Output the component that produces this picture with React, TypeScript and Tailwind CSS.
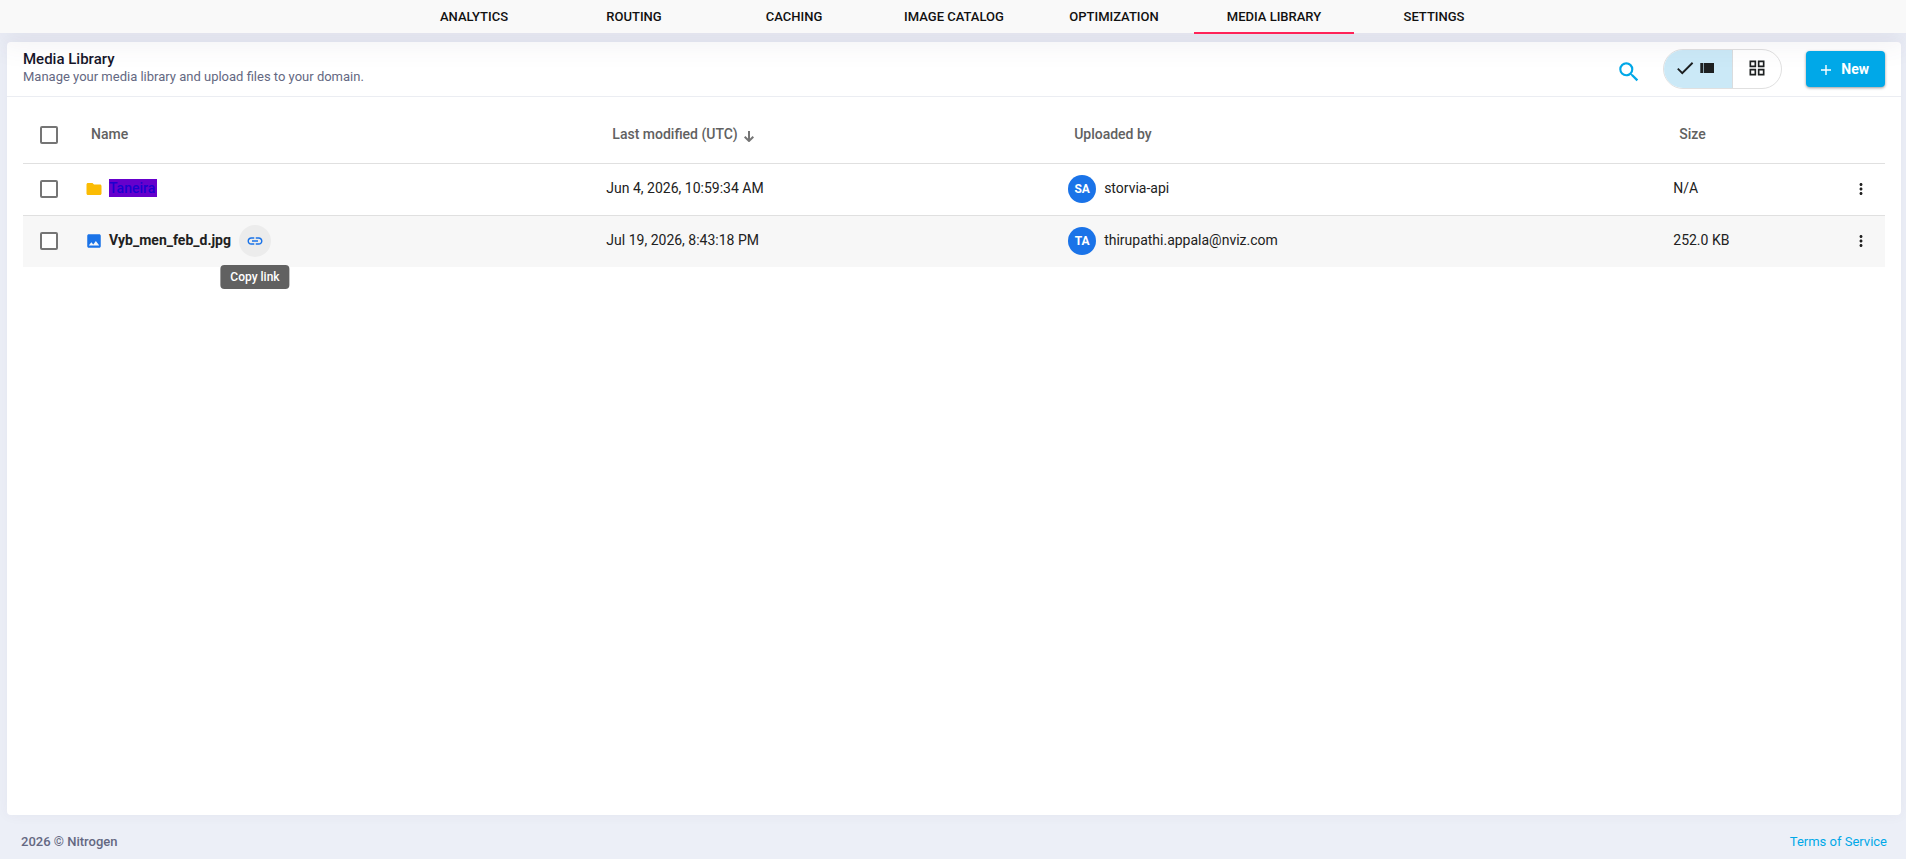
import React, { useState } from 'react';
import clsx from 'clsx';
import {
  MdCheck,
  MdFolder,
  MdImage,
  MdLink,
  MdMoreVert,
  MdOutlineGridView,
  MdSearch,
} from 'react-icons/md';

interface MediaItem {
  name: string;
  kind: 'folder' | 'image';
  modified: string;
  initials: string;
  uploadedBy: string;
  size: string;
}

const TABS = [
  'ANALYTICS',
  'ROUTING',
  'CACHING',
  'IMAGE CATALOG',
  'OPTIMIZATION',
  'MEDIA LIBRARY',
  'SETTINGS',
];

const ITEMS: MediaItem[] = [
  {
    name: 'Taneira',
    kind: 'folder',
    modified: 'Jun 4, 2026, 10:59:34 AM',
    initials: 'SA',
    uploadedBy: 'storvia-api',
    size: 'N/A',
  },
  {
    name: 'Vyb_men_feb_d.jpg',
    kind: 'image',
    modified: 'Jul 19, 2026, 8:43:18 PM',
    initials: 'TA',
    uploadedBy: 'thirupathi.appala@nviz.com',
    size: '252.0 KB',
  },
];

function NavTabs() {
  return (
    <nav className="relative z-10 flex h-[33px] justify-center bg-[#f9f9f9] pl-0.5 shadow-[0_10px_30px_0_rgba(82,63,105,0.08)]">
      {TABS.map((tab) => (
        <a
          key={tab}
          href="#"
          className={clsx(
            'flex h-[34px] w-40 items-center justify-center border-b-2 pt-0.5 text-[13px] leading-5 font-medium text-[#111]',
            tab === 'MEDIA LIBRARY' ? 'border-[#ff2358]' : 'border-transparent'
          )}
        >
          {tab}
        </a>
      ))}
    </nav>
  );
}

function ListIcon() {
  return (
    <svg width="14" height="10" viewBox="0 0 14 10" fill="#1d2021" aria-hidden="true">
      <rect x="0" y="0" width="1" height="10" fill="#4d5a60" />
      <rect x="1" y="0" width="2" height="10" />
      <rect x="3" y="0" width="1" height="10" fill="#8ba2ac" />
      <rect x="4" y="0" width="10" height="10" />
    </svg>
  );
}

function SortArrow() {
  return (
    <svg width="10" height="11" viewBox="0 0 10 11" fill="none" className="mt-1" aria-hidden="true">
      <path d="M5 0v10M0.7 5.7L5 10l4.3-4.3" stroke="#757575" strokeWidth="2" />
    </svg>
  );
}

function ViewToggle() {
  const [view, setView] = useState<'list' | 'grid'>('list');

  return (
    <div className="flex h-10 overflow-hidden rounded-full border border-[#e0e0e0] bg-white text-[#1d2021]">
      <button
        aria-label="List view"
        aria-pressed={view === 'list'}
        onClick={() => setView('list')}
        className={clsx(
          'flex w-[69px] items-center justify-center gap-1 border-r border-[#d9dcde] pr-2 pb-0.5',
          view === 'list' && 'bg-[#cbe9f7]'
        )}
      >
        {view === 'list' && <MdCheck size={22} />}
        <ListIcon />
      </button>
      <button
        aria-label="Grid view"
        aria-pressed={view === 'grid'}
        onClick={() => setView('grid')}
        className={clsx(
          'flex w-12 items-center justify-center pb-0.5',
          view === 'grid' && 'bg-[#cbe9f7]'
        )}
      >
        <MdOutlineGridView size={20} />
      </button>
    </div>
  );
}

function Checkbox({ label }: { label: string }) {
  return (
    <input
      type="checkbox"
      aria-label={label}
      className="ml-[17px] block h-[18px] w-[18px] appearance-none rounded-xs border-2 border-[#757575] bg-white checked:bg-[#00a8e8]"
    />
  );
}

function MediaRow({ item }: { item: MediaItem }) {
  const isFolder = item.kind === 'folder';

  return (
    <tr className={clsx('h-[52px]', isFolder ? 'border-b border-[#e0e0e0]' : 'bg-[#f7f7f7]')}>
      <td>
        <Checkbox label={`Select ${item.name}`} />
      </td>
      <td>
        <div className="flex items-center font-medium">
          {isFolder ? (
            <MdFolder size={18} className="mr-1.5 text-[#fbbc04]" />
          ) : (
            <MdImage size={18} className="mr-1.5 text-[#1a73e8]" />
          )}
          {isFolder ? (
            <a href="#" className="mb-0.5 bg-[#6600cc] pr-0.5 leading-[18px] text-[#1c00cf]">
              {item.name}
            </a>
          ) : (
            <a href="#" className="mb-0.5 font-bold leading-[18px]">
              {item.name}
            </a>
          )}
          {!isFolder && (
            <div className="relative ml-2">
              <button
                aria-label="Copy link"
                className="flex h-8 w-8 items-center justify-center rounded-full bg-[#ececec] text-[#1a73e8]"
              >
                <MdLink size={18} />
              </button>
              <span
                role="tooltip"
                className="absolute top-full left-1/2 mt-2 -translate-x-1/2 rounded bg-[#616161] px-2.5 py-1 text-xs font-medium whitespace-nowrap text-white"
              >
                Copy link
              </span>
            </div>
          )}
        </div>
      </td>
      <td className="pb-0.5">{item.modified}</td>
      <td>
        <div className="flex items-center gap-2">
          <span className="flex h-7 w-7 items-center justify-center rounded-full bg-[#1a73e8] text-xs font-bold text-white">
            {item.initials}
          </span>
          <span className="pb-0.5">{item.uploadedBy}</span>
        </div>
      </td>
      <td className="pb-0.5">{item.size}</td>
      <td>
        <button aria-label={`Actions for ${item.name}`} className="mr-[15px] ml-auto block">
          <MdMoreVert size={18} />
        </button>
      </td>
    </tr>
  );
}

export default function App() {
  return (
    <div className="flex min-h-screen flex-col bg-[#eceff7] font-['Roboto','Noto_Sans',sans-serif] text-sm text-[#212121]">
      <NavTabs />

      <main className="mt-[9px] mr-[5px] ml-[7px] flex flex-1 flex-col rounded bg-white shadow-[0_0_13px_0_rgba(82,63,105,0.05)]">
        <header className="flex h-[55px] items-center border-b border-[#ebedf2] px-4">
          <div className="flex-1 pb-1">
            <h1 className="text-[15px] leading-5 font-medium text-[#16162a]">Media Library</h1>
            <p className="text-[13px] leading-4 text-[#646882]">
              Manage your media library and upload files to your domain.
            </p>
          </div>
          <button aria-label="Search" className="mt-1.5 mr-[21px] text-[#00a8e8]">
            <MdSearch size={26} />
          </button>
          <ViewToggle />
          <button className="relative z-20 ml-6 flex h-9 items-center rounded bg-[#00a8e8] pr-4 pl-[15px] font-bold text-white shadow-[0_1px_3px_rgba(0,0,0,0.4)]">
            <svg width="10" height="10" viewBox="0 0 10 10" className="mt-0.5 mr-2.5" aria-hidden="true">
              <path d="M5 0v10M0 5h10" stroke="currentColor" strokeWidth="1.4" />
            </svg>
            New
          </button>
        </header>

        <div className="px-4 pt-[11px]">
          <table className="w-full table-fixed border-collapse text-left">
            <colgroup>
              <col className="w-[62px]" />
              <col className="w-[28%]" />
              <col className="w-[24.8%]" />
              <col className="w-[32.5%]" />
              <col className="w-[9%]" />
              <col />
            </colgroup>
            <thead>
              <tr className="h-[55px] border-b border-[#e0e0e0] text-[#616161]">
                <th>
                  <Checkbox label="Select all" />
                </th>
                <th className="pb-0.5 pl-1.5 font-medium">Name</th>
                <th className="pb-0.5 pl-1.5 font-medium">
                  <button className="flex items-center gap-1.5">
                    Last modified (UTC)
                    <SortArrow />
                  </button>
                </th>
                <th className="pb-0.5 pl-1.5 font-medium">Uploaded by</th>
                <th className="pb-0.5 pl-1.5 font-medium">Size</th>
                <th />
              </tr>
            </thead>
            <tbody>
              {ITEMS.map((item) => (
                <MediaRow key={item.name} item={item} />
              ))}
            </tbody>
          </table>
        </div>
      </main>

      <footer className="flex h-11 items-center justify-between pt-2.5 pr-[19px] pl-[21px] text-[13px]">
        <span className="font-medium text-[#646882]">2026 © Nitrogen</span>
        <a href="#" className="text-[#00a8e8]">
          Terms of Service
        </a>
      </footer>
    </div>
  );
}
